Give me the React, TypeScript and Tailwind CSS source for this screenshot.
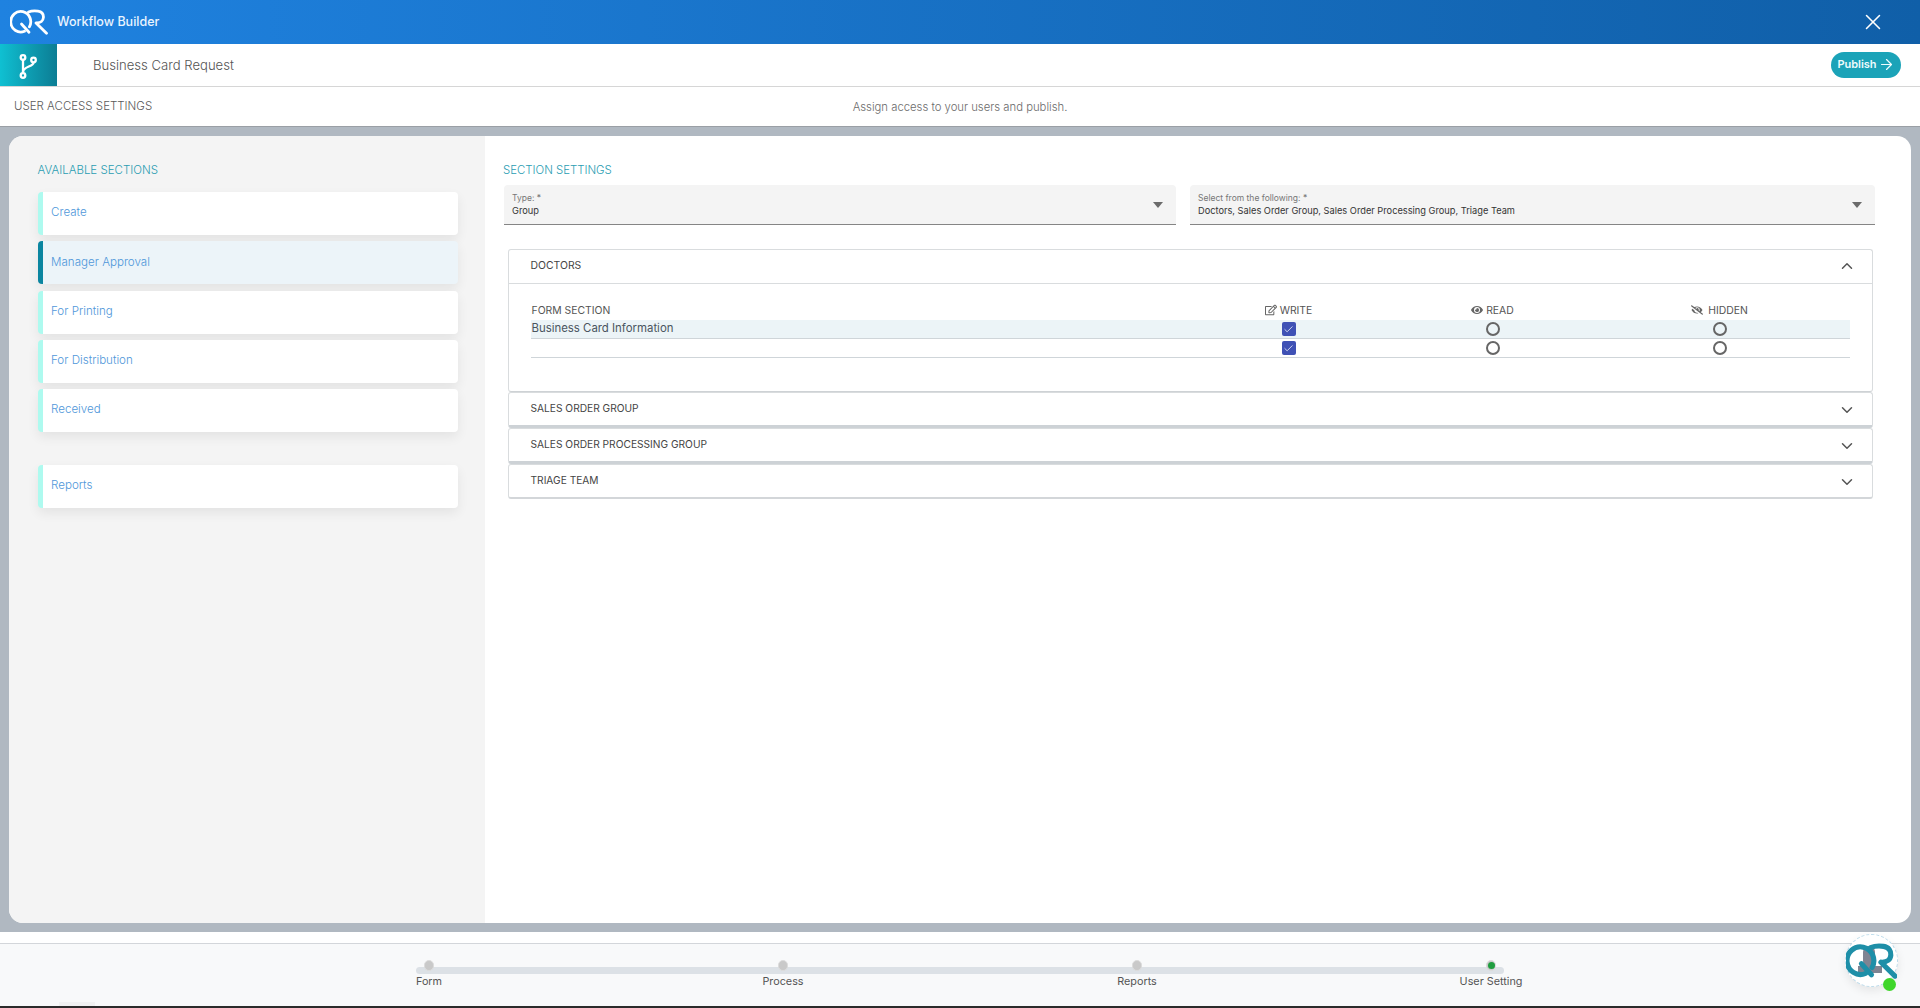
import { ArrowRight, ChevronDown, ChevronUp, Check, X } from "lucide-react";
import { FaEye, FaEyeSlash, FaRegEdit } from "react-icons/fa";

const sections = ["Create", "Manager Approval", "For Printing", "For Distribution", "Received"];
const steps = ["Form", "Process", "Reports", "User Setting"];
const groups = [
  { name: "SALES ORDER GROUP", box: "h-[36.5px] border-b-[3px] border-b-[#cdd2d6]" },
  { name: "SALES ORDER PROCESSING GROUP", box: "h-[36px] border-b-[3px] border-b-[#cdd2d6]" },
  { name: "TRIAGE TEAM", box: "h-[35px] border-b-2 border-b-[#d3d6d9]" },
];

// QR logo, used in the header and in the avatar
const QrLogo = ({ className, stroke, width }: { className: string; stroke: string; width: number }) => (
  <svg viewBox="0 0 38 25" fill="none" stroke={stroke} strokeWidth={width} strokeLinecap="round" className={className}>
    <path d="M14.5 21.8A10 10.3 0 1 1 19.4 17.4" />
    <path d="M11.5 14.5 19 22.8" />
    <path d="M18.5 2.5C21 1.4 25 1.2 28 1.6 32 2.2 33.6 5 33.4 8 33.2 11.4 30.4 13.4 27 13.4" />
    <path d="M26 13.4 36.5 23.8" />
  </svg>
);

const Arrow = () => (
  <span className="h-0 w-0 border-x-[5px] border-t-[6px] border-x-transparent border-t-[#6b6b6b]" />
);

const SelectBox = ({ label, value, className }: { label: string; value: string; className: string }) => (
  <div className={`flex h-[40px] items-center justify-between rounded-t-[4px] border-b border-[#858585] bg-[#f4f4f4] pl-[8px] pr-[13px] ${className}`}>
    <div className="flex flex-col">
      <span className="text-[8.5px] leading-[12px] text-[#777]">{label}</span>
      <span className="text-[9.25px] leading-[14px] text-[#333]">{value}</span>
    </div>
    <Arrow />
  </div>
);

const PermissionRow = ({ name, active }: { name: string; active?: boolean }) => (
  <div className={`grid h-[19px] grid-cols-[651px_214px_194px_260px] items-center border-b border-[#cfd5d9] ${active ? "bg-[#ecf4f7]" : ""}`}>
    <span className="pb-[1px] pl-[1px] text-[11.4px] text-[#4a5560]">{name}</span>
    <span className="flex h-[14px] w-[14px] items-center justify-center justify-self-center rounded-[2px] bg-[#3f51b5]">
      <Check size={11} strokeWidth={1.6} className="text-white" />
    </span>
    <span className="h-[14px] w-[14px] justify-self-center rounded-full border-2 border-[#666]" />
    <span className="h-[14px] w-[14px] justify-self-center rounded-full border-2 border-[#666]" />
  </div>
);

const SectionItem = ({ name, active }: { name: string; active?: boolean }) => (
  <div className={`flex h-[43px] items-center rounded-[4px] border-l-[5px] pb-[1px] pl-[8.5px] text-[11.6px] font-light text-[#4f97da] shadow-[0_5px_12px_rgba(0,0,0,0.07)] ${active ? "border-[#0a85a0] bg-[#ecf4f9]" : "border-[#aefaef] bg-white"}`}>
    {name}
  </div>
);

export default function App() {
  return (
    <div className="relative flex h-[1008px] w-full flex-col overflow-hidden bg-white font-['Inter','Liberation_Sans',sans-serif]">
      {/* Top bar */}
      <header className="flex h-[44px] items-center justify-between bg-gradient-to-r from-[#1f82e0] to-[#105fa8] pl-[10px] pr-[40px]">
        <div className="flex items-center gap-[9px]">
          <QrLogo className="h-[26px] w-[38px]" stroke="#ffffff" width={2.8} />
          <span className="text-[12.5px] font-medium text-[#eaf4ff]">Workflow Builder</span>
        </div>
        <X size={26} strokeWidth={1.4} className="-mr-[6px] text-white" />
      </header>

      {/* Title row */}
      <div className="flex h-[43px] items-center justify-between border-b border-[#d6d6d6] pr-[19px]">
        <div className="flex h-full items-center">
          <div className="flex h-full w-[57px] items-center justify-center bg-gradient-to-r from-[#0fc0d2] to-[#0c7d94] pt-[2px]">
            <svg viewBox="0 0 18 25" fill="none" stroke="#ffffff" strokeWidth="2.3" className="-ml-[2px] h-[25px] w-[18px]">
              <circle cx="4" cy="3.5" r="2.3" />
              <circle cx="14.5" cy="6" r="2.3" />
              <circle cx="4" cy="21.5" r="2.3" />
              <path d="M4 6v13" />
              <path d="M14.5 8.4C14.5 13 4 12 4 18" />
            </svg>
          </div>
          <span className="ml-[36px] pt-[2px] text-[13.1px] font-light text-[#555]">Business Card Request</span>
        </div>
        <button className="flex h-[26px] w-[70px] items-center justify-center gap-[1px] rounded-full bg-[#1ba3b8] pb-[2px] text-[11px] font-semibold text-[#eefbfd]">
          Publish
          <ArrowRight size={17} strokeWidth={1.7} />
        </button>
      </div>

      {/* Access settings row */}
      <div className="relative flex h-[40px] items-center border-b border-[#9a9fa5] pl-[14px] pt-[1px]">
        <span className="text-[11.5px] font-light text-[#5a5a5a]">USER ACCESS SETTINGS</span>
        <span className="absolute left-0 right-0 text-center text-[11.3px] font-light text-[#6b6b6b]">Assign access to your users and publish.</span>
      </div>

      {/* Main */}
      <main className="flex h-[805px] bg-[#b0b8c1] px-[9px] pb-[9px] pt-[9px]">
        <div className="flex flex-1 overflow-hidden rounded-[14px] bg-white">
          <aside className="flex w-[476px] flex-col bg-[#f4f4f4] pl-[28.5px] pr-[27px] pt-[25px]">
            <h2 className="mb-[13px] h-[18px] text-[11.5px] font-light leading-[18px] text-[#2a9db2]">AVAILABLE SECTIONS</h2>
            <div className="flex flex-col gap-[6.25px]">
              {sections.map((name) => (
                <SectionItem key={name} name={name} active={name === "Manager Approval"} />
              ))}
            </div>
            <div className="mt-[33px]">
              <SectionItem name="Reports" />
            </div>
          </aside>

          <section className="flex flex-1 flex-col pl-[19px] pt-[25px]">
            <h2 className="mb-[6px] -ml-[1px] h-[18px] text-[11.4px] font-light leading-[18px] text-[#2a9db2]">SECTION SETTINGS</h2>
            <div className="flex gap-[14px]">
              <SelectBox label="Type: *" value="Group" className="w-[672px]" />
              <SelectBox label="Select from the following: *" value="Doctors, Sales Order Group, Sales Order Processing Group, Triage Team" className="w-[685px]" />
            </div>

            <div className="ml-[4px] mt-[24px] w-[1365px]">
              <div className="h-[142.5px] rounded-[3px] border border-[#d9dcde] border-b-[#ced2d5]">
                <div className="flex h-[34px] items-center justify-between border-b border-[#d9dcde] pl-[21.5px] pr-[16px]">
                  <span className="pb-[1px] text-[10.4px] text-[#444]">DOCTORS</span>
                  <ChevronUp size={18} strokeWidth={2} className="-mt-[2px] text-[#555]" />
                </div>
                <div className="pl-[21.5px] pr-[22.5px] pt-[16px]">
                  <div className="grid h-[20px] grid-cols-[651px_214px_194px_260px] items-center pt-[1px] text-[10.4px] text-[#555]">
                    <span className="pl-[1px]">FORM SECTION</span>
                    <span className="flex items-center justify-center gap-[3px]"><FaRegEdit size={12} className="text-[#666]" />WRITE</span>
                    <span className="flex items-center justify-center gap-[3px]"><FaEye size={12} className="text-[#666]" />READ</span>
                    <span className="flex items-center justify-center gap-[5px]"><FaEyeSlash size={12} className="text-[#666]" />HIDDEN</span>
                  </div>
                  <PermissionRow name="Business Card Information" active />
                  <PermissionRow name="" />
                </div>
              </div>
              {groups.map((group) => (
                <div key={group.name} className={`flex items-center justify-between rounded-[3px] border border-[#d9dcde] pl-[21.5px] pr-[16px] ${group.box}`}>
                  <span className="text-[10.2px] text-[#444]">{group.name}</span>
                  <ChevronDown size={18} strokeWidth={2} className="mt-[2px] text-[#555]" />
                </div>
              ))}
            </div>
          </section>
        </div>
      </main>

      {/* Stepper */}
      <footer className="mt-[11px] flex h-[63px] items-start border-t border-[#d3d6da] bg-[#f8f9fa] pl-[416px] pt-[16px]">
        <div className="relative flex w-[1088px] justify-between">
          <div className="absolute left-0 right-0 top-[7px] h-[7px] rounded-full bg-[#dce1e6]" />
          {steps.map((step) => (
            <div key={step} className="relative flex w-[26px] flex-col items-center">
              <span className="flex h-[11px] w-[10px] items-center justify-center rounded-full border border-[#dcdcdc] bg-[#c9c9c9]">
                {step === "User Setting" && <span className="h-[7px] w-[7px] rounded-full bg-[#1f9d3f]" />}
              </span>
              <span className="mt-[3px] whitespace-nowrap text-[10.8px] text-[#555]">{step}</span>
            </div>
          ))}
        </div>
      </footer>
      <div className="h-[2px] bg-[#2b2b2b]" />
      <div className="absolute bottom-[2px] left-[59px] h-[4px] w-[36px] bg-[#f0f1f2]" />

      {/* Floating avatar */}
      <div className="absolute left-[1845px] top-[934px] flex h-[53px] w-[53px] items-center justify-center rounded-full border border-dashed border-[#bcdcec] bg-white shadow-[0_4px_10px_rgba(0,0,0,0.08)]">
        <span className="absolute left-[17px] top-[11px] h-[21px] w-[12px] rounded-full bg-[#7f8492]" />
        <span className="absolute left-[12px] top-[31px] h-[7px] w-[24px] bg-[#7f8492]" />
        <QrLogo className="relative h-[38px] w-[53px]" stroke="#1e8fa8" width={3.8} />
        <span className="absolute left-[37px] top-[43px] h-[13px] w-[13px] rounded-full bg-[#3fd62a]" />
      </div>
    </div>
  );
}
